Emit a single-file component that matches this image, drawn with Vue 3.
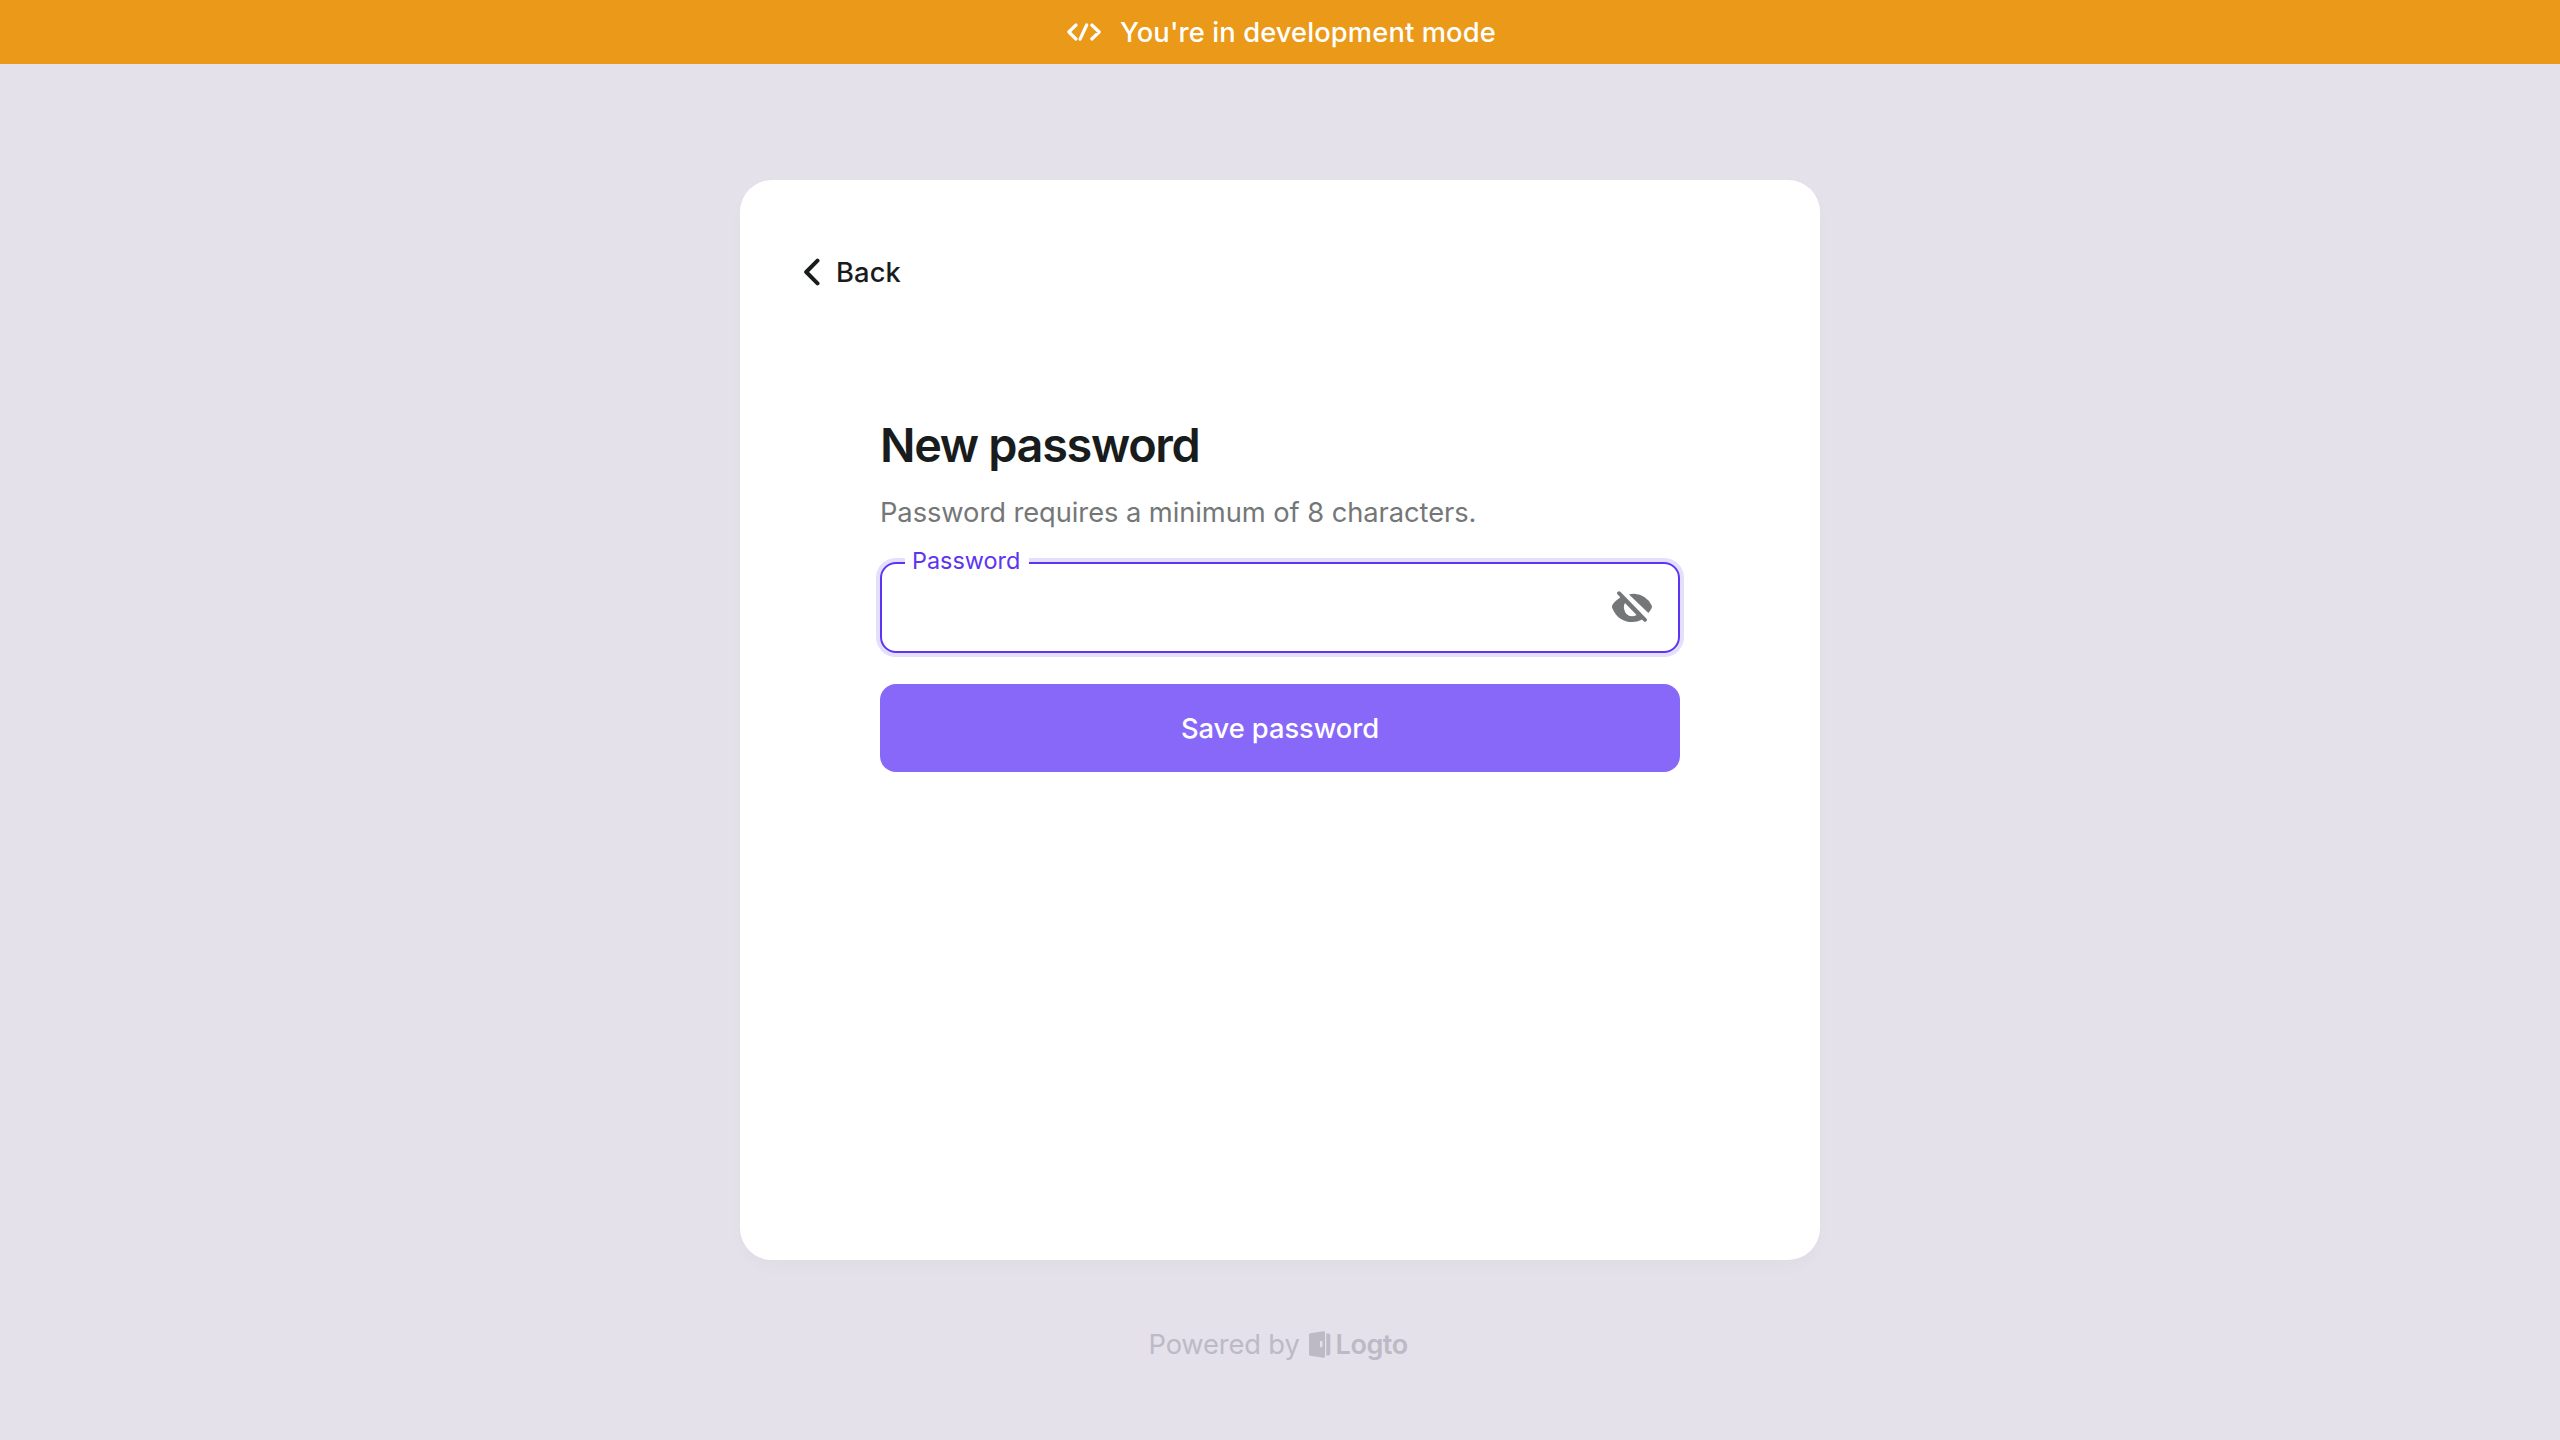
<script setup>
const labels = {
  banner: "You're in development mode",
  back: 'Back',
  title: 'New password',
  description: 'Password requires a minimum of 8 characters.',
  field: 'Password',
  submit: 'Save password',
  powered: 'Powered by',
  brand: 'Logto',
}
</script>

<template>
  <div class="page">
    <header class="banner">
      <svg class="code-icon" viewBox="0 0 36 20" fill="none" stroke="currentColor" stroke-width="3.2" stroke-linecap="round" stroke-linejoin="round">
        <path d="M10 3 2.800 10l7.200 7M20.700 3l-6.600 14.200M25.800 3l7.400 7-7.400 7" />
      </svg>
      <span class="banner-text">{{ labels.banner }}</span>
    </header>

    <main class="card">
      <nav class="back">
        <svg class="chevron" viewBox="0 0 18 28" fill="none" stroke="currentColor" stroke-width="4" stroke-linecap="round" stroke-linejoin="round">
          <path d="M14.500 2.600 3.200 14l11.300 11.400" />
        </svg>
        <span class="back-text">{{ labels.back }}</span>
      </nav>

      <form class="form" @submit.prevent>
        <h1 class="title">{{ labels.title }}</h1>
        <p class="description">{{ labels.description }}</p>
        <div class="field">
          <span class="label">{{ labels.field }}</span>
          <svg class="eye" viewBox="0 0 40 32">
            <path fill="none" stroke="currentColor" stroke-width="3.8" stroke-linecap="round" d="M7 2.200 33 28.800" />
            <path fill="currentColor" fill-rule="evenodd" d="M7.500 7Q1.500 11.200.200 14.400Q-.200 15.700.200 16.900Q6 31 20.500 31Q25.200 31 29.200 28.900L31 27 9 4.800ZM12.900 12Q11.600 14.500 12 17.400Q13.200 24.800 20 25.200Q22.400 25.200 24.600 24Z" />
            <path fill="currentColor" d="M17 3.400Q19.500 2.700 22 2.800Q34.500 3.800 39.700 14.500Q40.200 15.700 39.700 17Q38.700 19.300 36.400 22Z" />
          </svg>
        </div>
        <button class="submit" type="submit">{{ labels.submit }}</button>
      </form>
    </main>

    <footer class="footer">
      <span class="powered">{{ labels.powered }}</span>
      <svg class="door" viewBox="0 0 22 27" fill="currentColor">
        <path fill-rule="evenodd" d="M1.200 2.200 14.300.300Q16 .100 16 1.500v24Q16 26.900 14.300 26.700L1.200 24.800Q0 24.600 0 23.500v-20Q0 2.400 1.200 2.200ZM11 10.800v4.800q0 .700.700.700h1q.700 0 .700-.700v-4.800q0-.700-.700-.700h-1q-.700 0-.700.700Z" />
        <path d="M17.300 2.400h2q2 0 2 2v18.200q0 2-2 2h-2Z" />
      </svg>
      <span class="brand">{{ labels.brand }}</span>
    </footer>
  </div>
</template>

<style>
body {
  margin: 0;
  background: #e4e1eb;
}
</style>

<style scoped>
.page {
  height: 1440px;
  display: flex;
  flex-direction: column;
  align-items: center;
  background: #e4e1eb;
  font-family: Inter, "Liberation Sans", sans-serif;
  font-size: 27.3px;
  color: #191c1d;
  white-space: nowrap;
}
.banner {
  width: 100%;
  height: 64px;
  display: flex;
  align-items: center;
  box-sizing: border-box;
  padding-left: 1066px;
  background: #eb9918;
  color: #fff;
}
.code-icon {
  width: 36px;
  height: 20px;
  margin-right: 18px;
}
.banner-text {
  font-weight: 500;
  line-height: 62px;
  padding-top: 2px;
  letter-spacing: 0.12px;
}
.card {
  width: 1080px;
  height: 1080px;
  margin-top: 116px;
  box-sizing: border-box;
  border-radius: 32px;
  background: #fff;
  box-shadow: 0 8px 16px rgba(0, 0, 0, 0.018);
}
.back {
  display: flex;
  align-items: center;
  height: 48px;
  padding: 68px 0 0 63px;
}
.chevron {
  width: 18px;
  height: 28px;
  margin-right: 15px;
}
.back-text {
  font-weight: 500;
  letter-spacing: 0.1px;
}
.form {
  display: flex;
  flex-direction: column;
  width: 800px;
  margin: 117px auto 0;
}
.title {
  margin: 0;
  font-size: 46.8px;
  font-weight: 600;
  line-height: 64px;
  letter-spacing: -1.32px;
}
.description {
  margin: 16px 0 0;
  line-height: 40px;
  letter-spacing: -0.06px;
  color: #747778;
}
.field {
  position: relative;
  display: flex;
  align-items: center;
  justify-content: flex-end;
  height: 91px;
  margin-top: 29px;
  padding-right: 26px;
  box-sizing: border-box;
  border: 2px solid #5d34f2;
  border-radius: 16px;
  box-shadow: 0 0 0 4px #e5defc;
}
.label {
  position: absolute;
  left: 23px;
  top: -17px;
  width: 124px;
  height: 28px;
  box-sizing: border-box;
  padding-left: 7px;
  background: #fff;
  color: #5d34f2;
  font-size: 23.4px;
  line-height: 28px;
}
.eye {
  width: 40px;
  height: 32px;
  margin-bottom: 2px;
  color: #747778;
}
.submit {
  height: 88px;
  margin-top: 31px;
  padding: 2px 0 0;
  border: 0;
  border-radius: 16px;
  background: #8768f8;
  color: #fff;
  font: 500 27.3px/86px Inter, "Liberation Sans", sans-serif;
  letter-spacing: -0.06px;
}
.footer {
  display: flex;
  align-items: center;
  align-self: flex-start;
  height: 40px;
  margin: 64px 0 0 1148.5px;
  color: #bdb9c5;
}
.powered {
  letter-spacing: -0.15px;
}
.door {
  width: 22px;
  height: 27px;
  margin: 0 5px 0 9px;
}
.brand {
  font-weight: 600;
  font-size: 27px;
  letter-spacing: -0.45px;
}
</style>
